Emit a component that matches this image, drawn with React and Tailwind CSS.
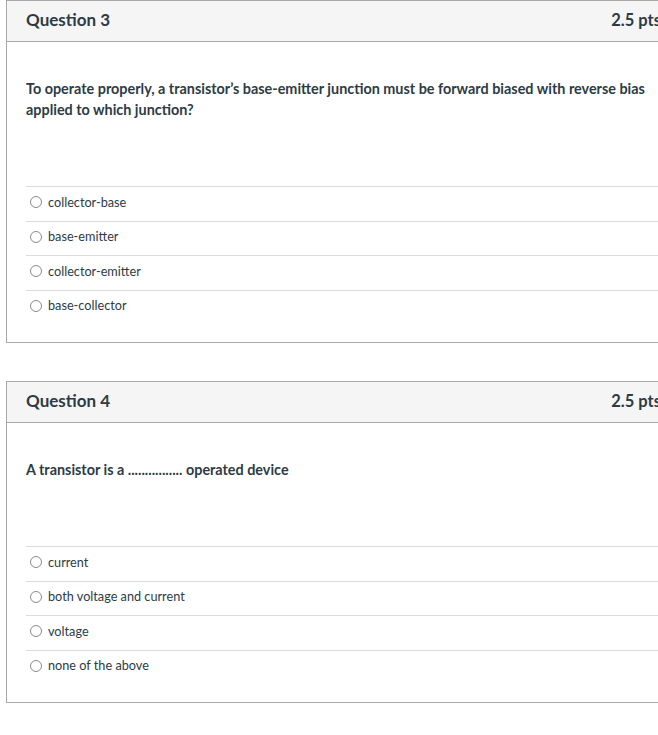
export default function App() {
  const questions = [
    {
      title: "Question 3",
      pts: "2.5 pts",
      text: "To operate properly, a transistor’s base-emitter junction must be forward biased with reverse bias applied to which junction?",
      answers: ["collector-base", "base-emitter", "collector-emitter", "base-collector"],
    },
    {
      title: "Question 4",
      pts: "2.5 pts",
      text: "A transistor is a ................ operated device",
      answers: ["current", "both voltage and current", "voltage", "none of the above"],
    },
  ];
  return (
    <div
      className="w-[658px] h-[735px] overflow-hidden bg-white text-[#2d3b45]"
      style={{ fontFamily: "Lato, 'Open Sans', sans-serif" }}
    >
      <div className="flex flex-col gap-[38px] pl-[6px]">
        {questions.map((q) => (
          <div key={q.title} className="w-[676px] shrink-0 border border-[#a8a8a8]">
            <div className="flex h-[41px] items-center justify-between border-b border-[#a8a8a8] bg-[#f5f5f5] pb-[2px] pl-[19px] pr-[20px]">
              <span className="text-[17px] font-bold">{q.title}</span>
              <span className="text-[16.5px] font-bold">{q.pts}</span>
            </div>
            <div className="pt-[36px] pl-[19px] pb-[18px]">
              <p className="w-[636px] text-[14.4px] font-bold leading-[21px]">{q.text}</p>
              <div className="mt-[66px]">
                {q.answers.map((a) => (
                  <div
                    key={a}
                    className="flex h-[34.5px] items-center gap-[6px] border-t border-[#dcdcdc] pb-[3px] pl-[4px]"
                  >
                    <span className="block h-[12px] w-[12px] rounded-full border border-[#8a8a8a]"></span>
                    <span className="text-[12.7px]">{a}</span>
                  </div>
                ))}
              </div>
            </div>
          </div>
        ))}
      </div>
    </div>
  );
}
